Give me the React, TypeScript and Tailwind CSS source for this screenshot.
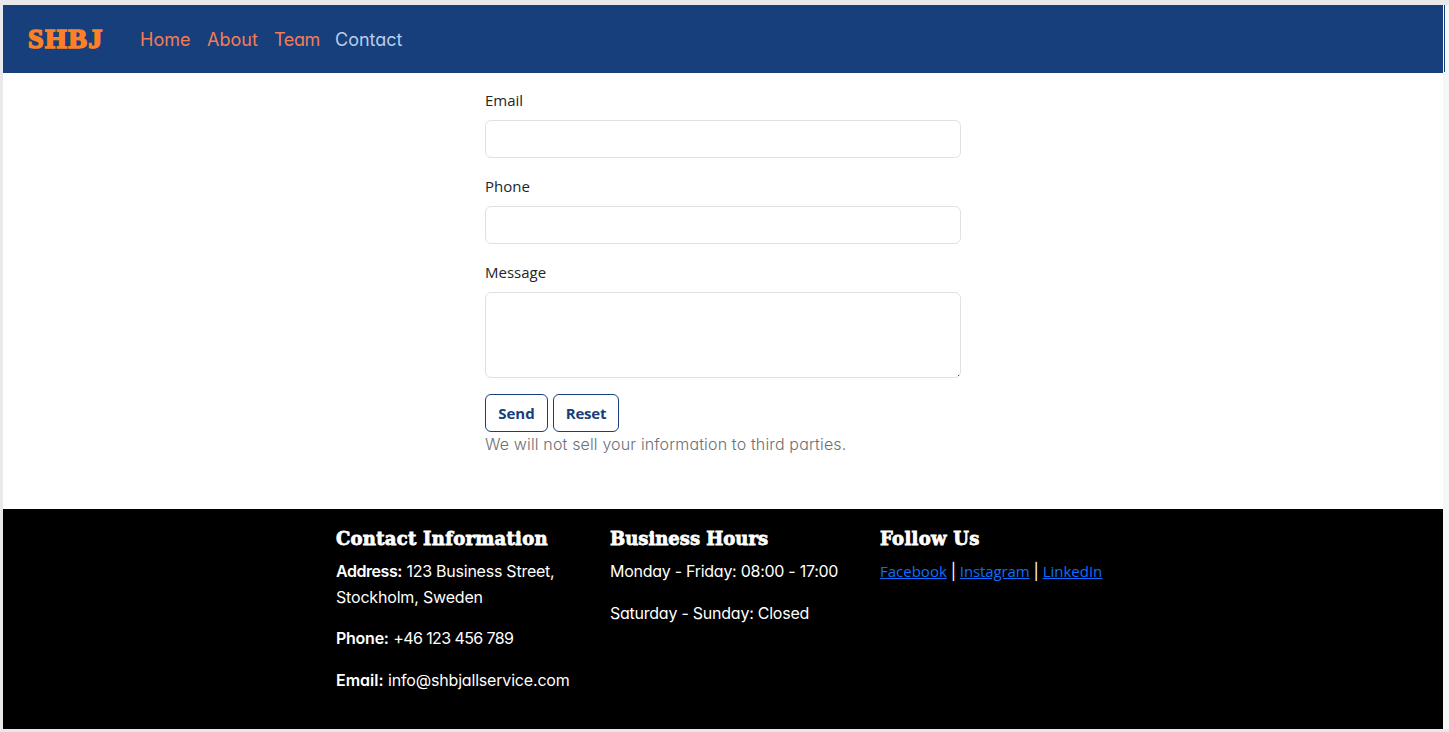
import type { ReactNode } from "react";

const body = "font-['Inter',sans-serif] [font-feature-settings:'cv11']";
const ui = "font-['Open_Sans',sans-serif]";
const slab = "font-['DejaVu_Serif',serif] font-bold";

function Label({ htmlFor, children }: { htmlFor: string; children: ReactNode }) {
  return (
    <label htmlFor={htmlFor} className={`${ui} mb-2 block text-[15px] leading-6 text-[#212529]`}>
      {children}
    </label>
  );
}

function Field({ id, type, label }: { id: string; type: string; label: string }) {
  return (
    <div className="mb-4">
      <Label htmlFor={id}>{label}</Label>
      <input id={id} type={type} className="block h-[38px] w-full rounded-md border border-[#dee2e6] bg-white px-3" />
    </div>
  );
}

function Heading({ className, children }: { className: string; children: ReactNode }) {
  return (
    <h5 className={`${slab} ${className} mb-2 h-6 text-[18px] leading-6 whitespace-nowrap [-webkit-text-stroke:0.8px_white]`}>
      {children}
    </h5>
  );
}

function SocialLink({ className, children }: { className: string; children: ReactNode }) {
  return (
    <a href="#" className={`${ui} ${className} text-[15px] text-[#0d6efd] underline`}>
      {children}
    </a>
  );
}

export default function App() {
  return (
    <div className="flex h-[732px] w-[1449px] overflow-hidden bg-[#e9e9eb] pt-[5px] pb-[3px] pl-[3px]">
      <div className="flex w-[1440px] shrink-0 flex-col bg-white">
        <nav className="flex h-[68px] shrink-0 items-center bg-[#163f7c] pl-[25px]">
          <a
            href="#"
            className="w-[112px] font-['Liberation_Serif',serif] text-[28px] leading-8 font-bold tracking-[1.4px] text-[#ff7f27] [-webkit-text-stroke:1.6px_#ff7f27]"
          >
            SHBJ
          </a>
          <div className={`${body} flex gap-4 pt-px text-[18px] leading-7 text-[#f47c55]`}>
            <a href="#" className="w-[51px]">Home</a>
            <a href="#" className="w-[51px]">About</a>
            <a href="#" className="w-[45px] tracking-[-0.4px]">Team</a>
            <a href="#" className="text-[#b9cdea]">Contact</a>
          </div>
        </nav>

        <main className="grow pt-[15px] pl-[482px]">
          <form className="w-[476px]">
            <Field id="email" type="email" label="Email" />
            <Field id="phone" type="tel" label="Phone" />
            <Label htmlFor="message">Message</Label>
            <div className="relative mb-4">
              <textarea
                id="message"
                className="block h-[86px] w-full resize-none rounded-md border border-[#dee2e6] bg-white px-3 py-1.5"
              />
              <span className="absolute right-[2px] bottom-[2px] size-px bg-[#444]" />
            </div>
            <div className={`${ui} flex gap-[5px] text-[15px] font-bold text-[#163f7c]`}>
              <button type="button" className="h-[38px] w-[63px] rounded-md border border-[#163f7c]">Send</button>
              <button type="button" className="h-[38px] w-[66px] rounded-md border border-[#163f7c] tracking-[-0.2px]">Reset</button>
            </div>
            <p className={`${body} text-[16px] leading-[25px] font-light tracking-[0.15px] whitespace-nowrap text-[#6c7075]`}>
              We will not sell your information to third parties.
            </p>
          </form>
        </main>

        <footer className={`${body} flex h-[220px] shrink-0 bg-black pt-[18px] pl-[333px] text-[16px] leading-[25.5px] text-white`}>
          <section className="w-[274px]">
            <Heading className="tracking-[0.27px]">Contact Information</Heading>
            <p className="mb-4 whitespace-nowrap">
              <strong className="font-semibold tracking-[-0.45px]">Address:</strong>{" "}
              <span className="tracking-[-0.24px]">123 Business Street,</span>
              <br />
              <span className="tracking-[-0.18px]">Stockholm, Sweden</span>
            </p>
            <p className="mb-4 whitespace-nowrap">
              <strong className="font-semibold tracking-[-0.25px]">Phone:</strong>{" "}
              <span className="tracking-[-0.6px]">+46 123 456 789</span>
            </p>
            <p className="whitespace-nowrap">
              <strong className="font-semibold">Email:</strong>{" "}
              <span className="tracking-[-0.18px]">info@shbjallservice.com</span>
            </p>
          </section>
          <section className="w-[270px]">
            <Heading className="">Business Hours</Heading>
            <p className="mb-4 tracking-[-0.27px]">Monday - Friday: 08:00 - 17:00</p>
            <p className="tracking-[-0.24px]">Saturday - Sunday: Closed</p>
          </section>
          <section>
            <Heading className="tracking-[0.3px]">Follow Us</Heading>
            <p className="flex whitespace-nowrap">
              <SocialLink className="">Facebook</SocialLink>
              <span className="w-[13px] text-center">|</span>
              <SocialLink className="tracking-[-0.1px]">Instagram</SocialLink>
              <span className="w-[13px] text-center">|</span>
              <SocialLink className="">LinkedIn</SocialLink>
            </p>
          </section>
        </footer>
      </div>
      <div className="flex grow flex-col bg-[#f7f7f8]">
        <div className="ml-px h-[67px] w-px bg-[#163f7c]" />
      </div>
    </div>
  );
}
